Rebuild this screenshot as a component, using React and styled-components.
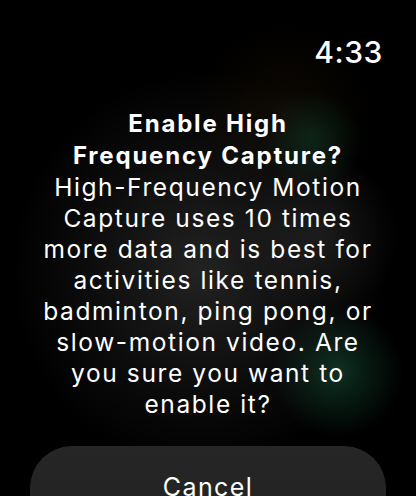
import React from "react";
import styled, { createGlobalStyle } from "styled-components";

const GlobalStyle = createGlobalStyle`
  html, body {
    margin: 0;
    padding: 0;
    background: #000;
  }
  body {
    font-family: Inter, "Noto Sans", "Liberation Sans", sans-serif;
    -webkit-font-smoothing: antialiased;
  }
`;

const Screen = styled.div`
  width: 416px;
  height: 496px;
  overflow: hidden;
  background:
    radial-gradient(circle at 312px 140px, rgba(20, 90, 60, 0.35) 0, rgba(20, 90, 60, 0) 50px),
    radial-gradient(circle at 338px 372px, rgba(30, 110, 75, 0.42) 0, rgba(30, 110, 75, 0) 65px),
    radial-gradient(circle at 285px 110px, rgba(70, 45, 10, 0.18) 0, rgba(70, 45, 10, 0) 90px),
    radial-gradient(circle at 320px 235px, rgba(90, 90, 90, 0.22) 0, rgba(90, 90, 90, 0) 80px),
    radial-gradient(ellipse 190px 200px at 200px 270px, rgba(38, 38, 38, 0.9) 0, rgba(26, 26, 26, 0.45) 60%, rgba(0, 0, 0, 0) 100%),
    #000;
  color: #fff;
  display: flex;
  flex-direction: column;
`;

const StatusBar = styled.div`
  display: flex;
  justify-content: flex-end;
  padding: 32px 33px 0 0;
  height: 40px;
`;

const Time = styled.span`
  font-size: 30px;
  font-weight: 500;
  letter-spacing: 0.6px;
  line-height: 40px;
`;

const Content = styled.div`
  display: flex;
  flex-direction: column;
  align-items: center;
  text-align: center;
  padding: 36px 0 0;
  white-space: nowrap;
`;

const Title = styled.h1`
  margin: 0;
  font-size: 24px;
  font-weight: 700;
  line-height: 32px;
  letter-spacing: 1.8px;
`;

const Body = styled.p`
  margin: 0;
  font-size: 24.5px;
  font-weight: 400;
  line-height: 31px;
  letter-spacing: 1.6px;
`;

const Button = styled.button`
  display: flex;
  justify-content: center;
  align-items: flex-start;
  margin: 26px 30px 0;
  height: 90px;
  border: none;
  border-radius: 42px;
  background: linear-gradient(180deg, #262626 0%, #222 100%);
  color: #fff;
  font-family: inherit;
  font-size: 25px;
  line-height: 30px;
  letter-spacing: 1.4px;
  padding: 26px 0 0;
  flex-shrink: 0;
`;

const bodyLines = [
  "High-Frequency Motion",
  "Capture uses 10 times",
  "more data and is best for",
  "activities like tennis,",
  "badminton, ping pong, or",
  "slow-motion video. Are",
  "you sure you want to",
  "enable it?",
];

export default function App() {
  return (
    <>
      <GlobalStyle />
      <Screen>
        <StatusBar>
          <Time>4:33</Time>
        </StatusBar>
        <Content>
          <Title>
            Enable High
            <br />
            Frequency Capture?
          </Title>
          <Body>
            {bodyLines.map((line, i) => (
              <React.Fragment key={i}>
                {line}
                {i < bodyLines.length - 1 && <br />}
              </React.Fragment>
            ))}
          </Body>
        </Content>
        <Button>Cancel</Button>
      </Screen>
    </>
  );
}
